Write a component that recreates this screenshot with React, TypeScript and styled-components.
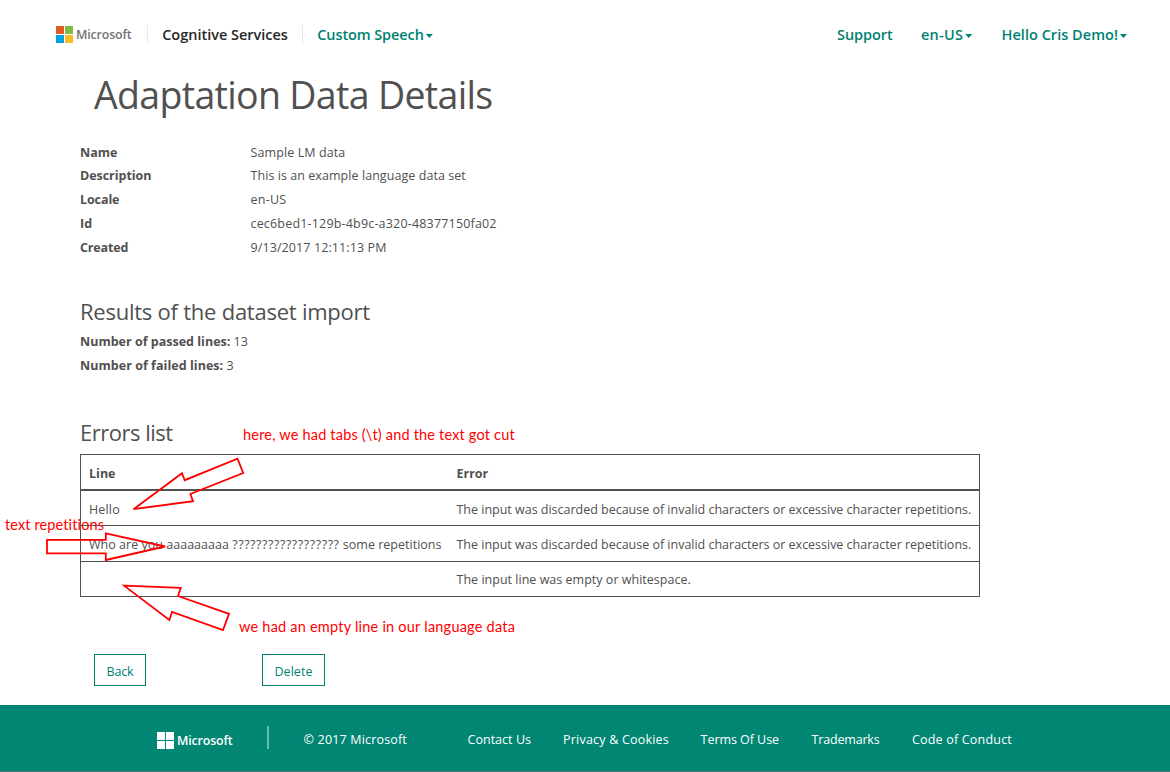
import React from 'react';
import styled, { createGlobalStyle } from 'styled-components';

const ink = '#505050';
const teal = '#008272';

const GlobalStyle = createGlobalStyle`
  * { box-sizing: border-box; }
  body {
    margin: 0;
    background: #fff;
    color: ${ink};
    font-family: 'Open Sans', 'Noto Sans', sans-serif;
    font-size: 12.5px;
    overflow: hidden;
  }
`;

const Page = styled.div`
  position: relative;
  display: flex;
  flex-direction: column;
  width: 1170px;
  height: 772px;
  overflow: hidden;
  white-space: nowrap;
`;

const Text = styled.span<{ $track?: number }>`
  letter-spacing: ${(p) => p.$track ?? 0}px;
  white-space: pre;
`;

/* Header */
const Header = styled.header`
  display: flex;
  align-items: center;
  height: 68px;
  padding-left: 56px;
  font-size: 14.5px;
  font-weight: 600;
  color: ${teal};
`;

const Brand = styled.div<{ $width: number; $color: string }>`
  display: flex;
  align-items: center;
  gap: 3px;
  width: ${(p) => p.$width}px;
  color: ${(p) => p.$color};
  font-size: 12.4px;
  font-weight: 600;
  line-height: 18px;
  letter-spacing: -0.15px;
`;

const BrandName = styled.span`
  padding-top: 2px;
`;

const HeaderRule = styled.i`
  width: 1px;
  height: 19px;
  background: #e9e9e9;
`;

const NavLink = styled.a<{ $width: number; $dark?: boolean }>`
  display: flex;
  align-items: center;
  width: ${(p) => p.$width}px;
  padding-top: 1px;
  line-height: 20px;
  color: ${(p) => (p.$dark ? '#262626' : teal)};
`;

const PrimaryLink = styled(NavLink)`
  padding-left: 14.2px;
`;

const Caret = styled.i`
  width: 7px;
  height: 4px;
  margin: 3px 0 0 2px;
  background: ${teal};
  clip-path: polygon(0 0, 100% 0, 50% 100%);
`;

/* Main content */
const Main = styled.main`
  height: 637px;
  padding-left: 80px;
`;

const Title = styled.h1`
  margin: 0 0 0 14px;
  padding-top: 2px;
  height: 73px;
  font-size: 37.5px;
  font-weight: 400;
  line-height: 50px;
  letter-spacing: -0.68px;
`;

const Details = styled.dl`
  display: grid;
  grid-template-columns: 170.5px auto;
  grid-template-rows: 23px;
  grid-auto-rows: 24px;
  margin: 0;
  line-height: 24px;
`;

const Label = styled.dt`
  font-weight: 700;
`;

const Value = styled.dd`
  margin: 0;
`;

const SectionTitle = styled.h2`
  margin: 0 0 1px;
  font-size: 22px;
  font-weight: 400;
  line-height: 36px;
`;

const Results = styled.section`
  margin-top: 33px;
  height: 121px;
`;

const Count = styled.p`
  margin: 0;
  line-height: 24px;
`;

const ErrorTable = styled.div`
  width: 900px;
  margin-top: 4px;
  border: 1px solid ${ink};
`;

const ErrorRow = styled.div<{ $height: number; $head?: boolean }>`
  display: grid;
  grid-template-columns: 367.5px auto;
  align-items: center;
  height: ${(p) => p.$height}px;
  padding: 2px 0 0 8px;
  font-weight: ${(p) => (p.$head ? 700 : 400)};
  border-bottom: ${(p) => (p.$head ? 2 : 1)}px solid ${ink};
  &:last-child {
    padding-top: 0;
    border-bottom: 0;
  }
`;

const Actions = styled.div`
  display: flex;
  gap: 116px;
  margin: 57px 0 0 14px;
`;

const Button = styled.button<{ $width: number }>`
  width: ${(p) => p.$width}px;
  height: 32px;
  padding: 2px 0 0;
  border: 1px solid ${teal};
  background: #fff;
  color: ${teal};
  font: inherit;
`;

/* Footer */
const Footer = styled.footer`
  display: flex;
  align-items: center;
  height: 67px;
  padding: 2px 0 0 157px;
  border-bottom: 1px solid #4a7a78;
  background: #008673;
  color: #fff;
`;

const FooterBrand = styled(Brand)`
  padding-top: 2px;
`;

const FooterRule = styled.i`
  width: 2px;
  height: 23px;
  margin: -3px 34.6px 0 0;
  background: #6bb9ae;
`;

const FooterLink = styled.a<{ $width: number }>`
  width: ${(p) => p.$width}px;
`;

/* Annotations drawn over the page */
const Arrows = styled.svg`
  position: absolute;
  inset: 0;
  fill: none;
  stroke: #f00;
  stroke-width: 1.8;
`;

const Note = styled.span<{ $x: number; $y: number; $track: number }>`
  position: absolute;
  left: ${(p) => p.$x}px;
  top: ${(p) => p.$y}px;
  color: #f00;
  font: 14.5px/20px Lato, sans-serif;
  letter-spacing: ${(p) => p.$track}px;
`;

function Squares({ colors }: { colors: string[] }) {
  return (
    <svg width="17" height="17" viewBox="0 0 17 17">
      <rect width="8" height="8" fill={colors[0]} />
      <rect x="9" width="8" height="8" fill={colors[1]} />
      <rect y="9" width="8" height="8" fill={colors[2]} />
      <rect x="9" y="9" width="8" height="8" fill={colors[3]} />
    </svg>
  );
}

const details: [string, number, string, number][] = [
  ['Name', 0, 'Sample LM data', 0.1],
  ['Description', -0.04, 'This is an example language data set', 0.06],
  ['Locale', -0.1, 'en-US', 0.25],
  ['Id', 0, 'cec6bed1-129b-4b9c-a320-48377150fa02', 0.18],
  ['Created', -0.15, '9/13/2017 12:11:13 PM', 0.1],
];

const discarded =
  'The input was discarded because of invalid characters or excessive character repetitions.';

type Run = [string, number];

const errors: { line: Run[]; height: number; error: Run }[] = [
  { line: [['Hello', 0.15]], height: 35, error: [discarded, -0.013] },
  {
    line: [
      ['Who are you aaaaaaaaa ', 0.02],
      ['??????????????????', 0.57],
      [' some repetitions', 0.01],
    ],
    height: 36,
    error: [discarded, -0.013],
  },
  { line: [], height: 34, error: ['The input line was empty or whitespace.', 0.017] },
];

const footerLinks: [string, number, number][] = [
  ['© 2017 Microsoft', 163.9, 0.17],
  ['Contact Us', 95.6, 0.03],
  ['Privacy & Cookies', 137.5, 0.2],
  ['Terms Of Use', 111, -0.05],
  ['Trademarks', 100.3, -0.18],
  ['Code of Conduct', 110, 0.2],
];

export default function App() {
  return (
    <Page>
      <GlobalStyle />
      <Header>
        <Brand $width={91} $color="#737373">
          <Squares colors={['#e25a28', '#7fba42', '#00a3df', '#f8bc2a']} />
          <BrandName>Microsoft</BrandName>
        </Brand>
        <HeaderRule />
        <PrimaryLink $width={154} $dark>
          <Text $track={-0.02}>Cognitive Services</Text>
        </PrimaryLink>
        <HeaderRule />
        <PrimaryLink $width={534}>
          <Text $track={-0.09}>Custom Speech</Text>
          <Caret />
        </PrimaryLink>
        <NavLink $width={84}>
          <Text $track={-0.05}>Support</Text>
        </NavLink>
        <NavLink $width={80.5}>
          <Text $track={0.25}>en-US</Text>
          <Caret />
        </NavLink>
        <NavLink $width={130}>
          <Text $track={0.03}>Hello Cris Demo!</Text>
          <Caret />
        </NavLink>
      </Header>

      <Main>
        <Title>Adaptation Data Details</Title>
        <Details>
          {details.map(([label, labelTrack, value, track]) => (
            <React.Fragment key={label}>
              <Label><Text $track={labelTrack}>{label}</Text></Label>
              <Value><Text $track={track}>{value}</Text></Value>
            </React.Fragment>
          ))}
        </Details>

        <Results>
          <SectionTitle><Text $track={-0.24}>Results of the dataset import</Text></SectionTitle>
          <Count><b><Text $track={0.01}>Number of passed lines:</Text></b> 13</Count>
          <Count><b><Text $track={0.04}>Number of failed lines:</Text></b> 3</Count>
        </Results>

        <SectionTitle><Text $track={-0.5}>Errors list</Text></SectionTitle>
        <ErrorTable>
          <ErrorRow $height={36} $head>
            <span>Line</span>
            <span>Error</span>
          </ErrorRow>
          {errors.map(({ line, height, error }, i) => (
            <ErrorRow key={i} $height={height}>
              <span>
                {line.map(([text, track]) => (
                  <Text key={text} $track={track}>{text}</Text>
                ))}
              </span>
              <Text $track={error[1]}>{error[0]}</Text>
            </ErrorRow>
          ))}
        </ErrorTable>

        <Actions>
          <Button $width={52}><Text $track={-0.2}>Back</Text></Button>
          <Button $width={63}><Text $track={0.05}>Delete</Text></Button>
        </Actions>
      </Main>

      <Footer>
        <FooterBrand $width={110} $color="#fff">
          <Squares colors={['#fff', '#fff', '#fff', '#fff']} />
          <BrandName>Microsoft</BrandName>
        </FooterBrand>
        <FooterRule />
        {footerLinks.map(([label, width, track]) => (
          <FooterLink key={label} $width={width}>
            <Text $track={track}>{label}</Text>
          </FooterLink>
        ))}
      </Footer>

      <Arrows width="1170" height="772" viewBox="0 0 1170 772">
        <path d="M133.5 509.2 182 473.2 184.7 480.2 237.5 458.6 243.2 473 190.4 494 193 501.2Z" />
        <path d="M47 539.8H105.8V533.3L165 546.5 105.8 560V553.4H47Z" />
        <path d="M124 585.6 180.8 587.9 178 596 229 613.8 223 630 172 611.8 169.4 620Z" />
      </Arrows>
      <Note $x={243} $y={425} $track={0.19}>here, we had tabs (\t) and the text got cut</Note>
      <Note $x={5} $y={515} $track={0.12}>text repetitions</Note>
      <Note $x={239} $y={617} $track={0.22}>we had an empty line in our language data</Note>
    </Page>
  );
}
